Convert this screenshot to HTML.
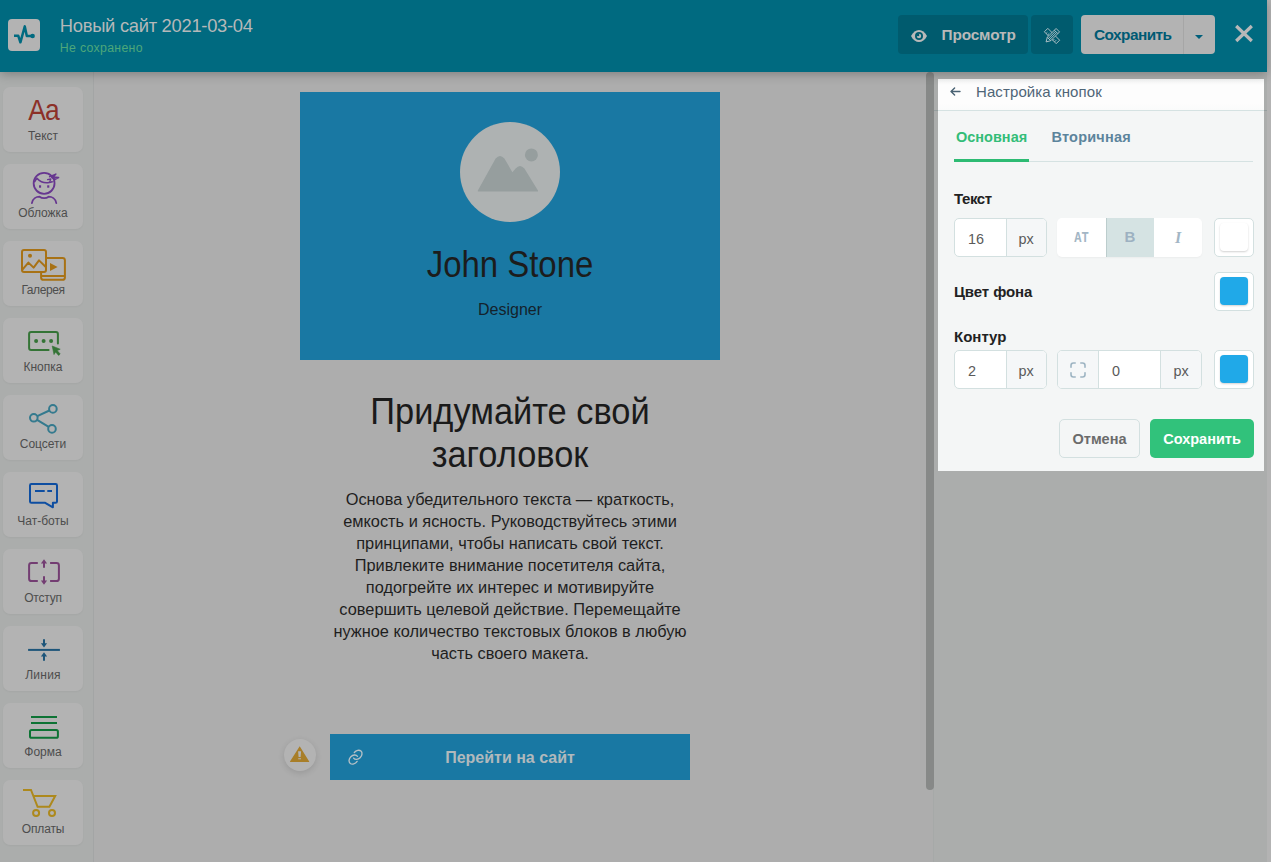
<!DOCTYPE html>
<html lang="ru">
<head>
<meta charset="utf-8">
<title>Новый сайт 2021-03-04</title>
<style>
*{box-sizing:border-box;margin:0;padding:0}
html,body{width:1271px;height:862px;overflow:hidden}
body{position:relative;background:#adadad;font-family:"Liberation Sans",sans-serif;color:#333}
.abs{position:absolute}
.t{position:absolute;white-space:nowrap;line-height:1}
svg{position:absolute;overflow:visible}

/* right strip */
#strip{left:1267px;top:0;width:4px;height:862px;background:#b3b3b3}

/* header */
#hdr{left:0;top:0;width:1267px;height:72px;background:#006a80;box-shadow:0 2px 10px rgba(0,0,0,.27);z-index:5}
#logo{left:8px;top:19px;width:32px;height:32px;border-radius:4px;background:#b3b3b3}
#ttl{left:59.8px;top:17.2px;font-size:18.4px;letter-spacing:-.3px;color:#b5b8b9}
#sub{left:59.8px;top:42.3px;font-size:12.3px;letter-spacing:.32px;color:#4da77a}
.hb{position:absolute;top:15px;height:39px;border-radius:4px;background:#005b6e}
.hbt{font-weight:bold;font-size:15.4px}

/* sidebar */
#side{left:0;top:72px;width:94px;height:790px;background:#abadac;border-right:1px solid #a3a5a5}
.it{position:absolute;left:3px;width:80px;height:65px;border-radius:7px;background:#b3b3b3;box-shadow:0 1px 2px rgba(0,0,0,.04)}
.it .lb{position:absolute;left:0;width:80px;top:42.6px;text-align:center;font-size:12px;line-height:1;color:#4d4d4d;white-space:nowrap}

/* canvas */
#card{left:300px;top:92px;width:420px;height:268px;background:#1978a3}
#ava{left:460px;top:122px;width:100px;height:100px;border-radius:50%;background:#aeb2b2}
.c{position:absolute;left:300px;width:420px;text-align:center;white-space:nowrap}

/* right */
#rside{left:934px;top:72px;width:333px;height:790px;background:#abadac}
#thumb{left:926px;top:72px;width:8px;height:718px;border-radius:4px;background:#878988}
#pan{left:938px;top:79px;width:326px;height:392px;background:#f4f6f6}
#panh{left:0;top:0;width:326px;height:31px;background:linear-gradient(#f4f5f5 0,#fdfdfd 5px,#fdfdfd 24px,#fafbfb 31px)}
.grp{position:absolute;height:39px;border:1px solid #d3e0e0;border-radius:5px;background:#fff;overflow:hidden}
.add{position:absolute;top:0;height:37px;background:#f5f7f8}
.pl{font-weight:bold;font-size:15px;color:#222}
.in{font-size:14.4px;color:#5a5a5a}
.sw{position:absolute;width:40px;height:39px;border:1px solid #d3e0e0;border-radius:5px;background:#fff}
.sw i{position:absolute;left:4.5px;top:4px;width:28.5px;height:28px;border-radius:4px;box-shadow:0 1px 2px rgba(0,0,0,.18)}
</style>
</head>
<body>

<div class="abs" id="strip"></div>

<!-- SIDEBAR -->
<div class="abs" id="side">
  <div class="it" style="top:15px">
    <div class="t" style="left:0;width:80px;text-align:center;top:8.2px;font-size:30px;letter-spacing:-1px;transform:translateX(.6px) scaleX(.88);color:#8c3028">Aa</div>
    <div class="lb">Текст</div>
  </div>
  <div class="it" style="top:92px">
    <svg width="80" height="65" viewBox="0 0 80 65" style="left:0;top:0"><g fill="none" stroke="#673790" stroke-width="1.8" stroke-linecap="round" stroke-linejoin="round"><circle cx="41.1" cy="19.35" r="10.45"/><path d="M28.9 39.2 C29.6 34.6 33.4 32.7 36.6 32.7 C39 34.6 43.2 34.6 45.6 32.7 C48.8 32.7 52.6 34.6 53.3 39.2"/><path d="M31.7 17.6 C32.4 16.2 33.2 15.2 34.2 14.4 C36.6 17.2 41 19 44.8 18.7 C46.6 18.5 48 18.3 49.2 17.8" stroke-width="1.6"/><path d="M46.6 12.6 L52.9 10.1 L50.2 13 L55.6 13.6 L51.6 15.6 L51.2 17.4" stroke-width="1.5"/><path d="M47 12.6 L51.6 11 L49.6 13.2 L53.6 13.8 L51 15.2 L48.6 14.2 Z" fill="#673790" stroke="none"/><path d="M44.6 15.6 L47.8 15 L46.8 17.4" stroke-width="1.3"/></g><rect x="36" y="21.3" width="2.1" height="2.4" fill="#673790"/><rect x="44.2" y="21.3" width="2.1" height="2.4" fill="#673790"/></svg>
    <div class="lb">Обложка</div>
  </div>
  <div class="it" style="top:169px">
    <svg width="80" height="65" viewBox="0 0 80 65" style="left:0;top:0"><g fill="none" stroke="#a87215" stroke-width="2" stroke-linejoin="round"><rect x="19" y="8.9" width="24" height="22" rx="2"/><path d="M43 16.9 H59.5 Q61.9 16.9 61.9 19.3 V36.4 Q61.9 38.8 59.5 38.8 H40.5 Q38.1 38.8 38.1 36.4 V31"/><path d="M38.6 35 H61.6"/><path d="M19.4 28.6 L25.4 21.6 L30.6 26.6 L36 19.4 L42.8 26"/></g><circle cx="27" cy="14.8" r="2" fill="#a87215"/><path d="M47 22 L54.6 26 L47 30 Z" fill="#a87215"/></svg>
    <div class="lb" style="letter-spacing:-.4px">Галерея</div>
  </div>
  <div class="it" style="top:246px">
    <svg width="80" height="65" viewBox="0 0 80 65" style="left:0;top:0"><g fill="none" stroke="#347436" stroke-width="2" stroke-linecap="round" stroke-linejoin="round"><path d="M54.9 25.6 V16 Q54.9 14 52.9 14 H28.1 Q26.1 14 26.1 16 V29.9 Q26.1 31.9 28.1 31.9 H45.6"/></g><circle cx="33.1" cy="22.9" r="2" fill="#347436"/><circle cx="40.6" cy="22.9" r="2" fill="#347436"/><circle cx="48.1" cy="22.9" r="2" fill="#347436"/><path d="M49.2 28 L57.2 31.2 L54.2 32.6 L57.2 36 L55.6 37.4 L52.6 34 L51 36.6 Z" fill="#347436" stroke="#347436" stroke-width="0.6" stroke-linejoin="round"/></svg>
    <div class="lb">Кнопка</div>
  </div>
  <div class="it" style="top:323px">
    <svg width="80" height="65" viewBox="0 0 80 65" style="left:0;top:0"><g fill="none" stroke="#347a8e" stroke-width="2"><circle cx="49.9" cy="13.9" r="3.8"/><circle cx="30.8" cy="22.8" r="3.8"/><circle cx="49" cy="33.9" r="3.8"/><path d="M34.3 21.2 L46.4 15.5 M34.1 24.8 L45.7 31.9"/></g></svg>
    <div class="lb">Соцсети</div>
  </div>
  <div class="it" style="top:400px">
    <svg width="80" height="65" viewBox="0 0 80 65" style="left:0;top:0"><g fill="none" stroke="#0e4ea1" stroke-width="2" stroke-linejoin="round"><path d="M28.4 12 H52.6 Q54 12 54 13.4 V29.4 Q54 30.8 52.6 30.8 H49.9 V35.3 L42.2 30.8 H28.4 Q27 30.8 27 29.4 V13.4 Q27 12 28.4 12 Z"/><path d="M32 19 H41.7 M44.3 19 H49"/></g></svg>
    <div class="lb">Чат-боты</div>
  </div>
  <div class="it" style="top:477px">
    <svg width="80" height="65" viewBox="0 0 80 65" style="left:0;top:0"><g fill="none" stroke="#733d72" stroke-width="2" stroke-linejoin="round"><path d="M34.8 14 H28.5 Q26.1 14 26.1 16.4 V29.7 Q26.1 32.1 28.5 32.1 H34.8"/><path d="M47.1 14 H53.5 Q55.9 14 55.9 16.4 V29.7 Q55.9 32.1 53.5 32.1 H47.1"/><path d="M41 12.6 V18.8 M41 27.2 V33.4"/></g><path d="M37.9 14.6 L41 10.2 L44.1 14.6 Z M37.9 31.4 L41 35.8 L44.1 31.4 Z" fill="#733d72"/></svg>
    <div class="lb" style="letter-spacing:-.2px">Отступ</div>
  </div>
  <div class="it" style="top:554px">
    <svg width="80" height="65" viewBox="0 0 80 65" style="left:0;top:0"><g fill="none" stroke="#1d557a" stroke-width="2"><path d="M25.1 23.9 H56.9"/><path d="M41 13.2 V18.4 M41 29.4 V34.8"/></g><path d="M37.9 17.2 L41 21.6 L44.1 17.2 Z M37.9 30.6 L41 26.2 L44.1 30.6 Z" fill="#1d557a"/></svg>
    <div class="lb" style="letter-spacing:.25px">Линия</div>
  </div>
  <div class="it" style="top:631px">
    <svg width="80" height="65" viewBox="0 0 80 65" style="left:0;top:0"><g fill="none" stroke="#0d7334" stroke-width="2"><path d="M28 14 H54 M28 19.9 H54"/><rect x="27" y="26.9" width="27.9" height="7.9" rx="1.6"/></g></svg>
    <div class="lb">Форма</div>
  </div>
  <div class="it" style="top:708px">
    <svg width="80" height="65" viewBox="0 0 80 65" style="left:0;top:0"><g fill="none" stroke="#ad891d" stroke-width="2" stroke-linejoin="miter"><path d="M20 10 H28 L34.6 26.8 H46.4 L52.2 15.9 H31"/><circle cx="33.1" cy="32.9" r="3"/><circle cx="49" cy="32.9" r="3"/></g></svg>
    <div class="lb" style="letter-spacing:-.15px">Оплаты</div>
  </div>
</div>

<!-- CANVAS -->
<div class="abs" id="card"></div>
<div class="abs" id="ava">
  <svg width="100" height="100" viewBox="0 0 100 100" style="left:0;top:0"><path d="M18.6 69.6 Q17.2 69.6 18 68.2 L35.6 36.6 Q40 31.4 44.4 36.6 L52.4 50.2 L55.6 46.4 Q60 41.4 64.4 46.4 L77.8 68.2 Q78.6 69.6 77.2 69.6 Z" fill="#969e9e"/><circle cx="71.4" cy="32.9" r="6.5" fill="#969e9e"/></svg>
</div>
<div class="c" id="nm" style="top:243px;font-size:37px;line-height:44px;color:#1c1c1c;transform:scaleX(.89)">John Stone</div>
<div class="c" id="ds" style="top:298.5px;font-size:16px;line-height:22px;color:#14222c">Designer</div>
<div class="c" id="h1" style="top:390px;font-size:36.4px;line-height:43px;color:#1a1a1a;transform:scaleX(.945)">Придумайте свой<br>заголовок</div>
<div class="c" id="bd" style="top:488.3px;font-size:16.35px;line-height:22px;color:#1e1e1e">Основа убедительного текста — краткость,<br>емкость и ясность. Руководствуйтесь этими<br>принципами, чтобы написать свой текст.<br>Привлеките внимание посетителя сайта,<br>подогрейте их интерес и мотивируйте<br>совершить целевой действие. Перемещайте<br>нужное количество текстовых блоков в любую<br>часть своего макета.</div>
<div class="abs" id="warn" style="left:284px;top:739px;width:32px;height:32px;border-radius:50%;background:#b3b3b3;box-shadow:0 2px 6px rgba(0,0,0,.12)">
  <svg width="32" height="32" viewBox="0 0 32 32" style="left:0;top:0"><path d="M15.7 7.2 L6 22.6 Q5.8 23 6.3 23 H25 Q25.5 23 25.2 22.6 Z" fill="#a87e28"/><path d="M14.1 12.2 H17.1 L16.6 17.9 H14.6 Z M14.2 19.2 H17 V20.3 H14.2 Z" fill="#b3b3b3"/></svg>
</div>
<div class="abs" id="btn" style="left:330px;top:734px;width:360px;height:46px;background:#1978a3">
  <svg width="32" height="30" viewBox="0 0 32 30" style="left:10px;top:8px" fill="none" stroke="#b4c0c6" stroke-width="1.35" stroke-linecap="round"><path d="M14.3 10.5 A5.1 3.9 -45 1 1 13.6 16.1"/><path d="M17.5 14.3 A5.1 3.9 -45 1 0 17.1 19.4"/></svg>
  <div class="t" style="left:0;width:360px;text-align:center;top:16px;font-size:16px;font-weight:bold;color:#b1b9bc">Перейти на сайт</div>
</div>

<!-- RIGHT -->
<div class="abs" id="rside"></div>
<div class="abs" style="left:933px;top:72px;width:1px;height:790px;background:#a6a9a8"></div>
<div class="abs" id="thumb"></div>
<div class="abs" id="pan">
  <div class="abs" id="panh"></div>
  <div class="abs" style="left:-4px;top:31px;width:333px;height:1px;background:#959e9e"></div><div class="abs" style="left:0;top:31px;width:326px;height:1px;background:#d5e2e2"></div>
  <svg width="11" height="9" viewBox="0 0 11 9" style="left:12px;top:8px" fill="none" stroke="#4a6273" stroke-width="1.4" stroke-linecap="round" stroke-linejoin="round"><path d="M10 4.5 H1.2 M4.6 1 L1 4.5 L4.6 8"/></svg>
  <div class="t" id="pt" style="left:38px;top:5px;font-size:15px;letter-spacing:.1px;color:#4f6577">Настройка кнопок</div>

  <div class="t" id="tb1" style="left:18px;top:51px;font-size:14.5px;font-weight:bold;color:#33bd78">Основная</div>
  <div class="t" id="tb2" style="left:113.5px;top:51px;letter-spacing:.2px;font-size:14.5px;font-weight:bold;color:#5c849c">Вторичная</div>
  <div class="abs" style="left:16px;top:82px;width:299px;height:1px;background:#d5e2e2"></div>
  <div class="abs" style="left:16px;top:80px;width:75px;height:3px;background:#2dbb73"></div>

  <div class="t pl" id="l1" style="left:16px;top:112px;letter-spacing:-.4px">Текст</div>
  <div class="grp" style="left:16px;top:139px;width:93px">
    <div class="add" style="left:50.5px;width:41px;border-left:1px solid #d3e0e0"></div>
    <div class="t in" style="left:13px;top:13px">16</div>
    <div class="t in" style="left:63.6px;top:13px">px</div>
  </div>
  <div class="abs" id="bg3" style="left:119px;top:139px;width:145px;height:39px;border-radius:5px;background:#fff;overflow:hidden;box-shadow:0 1px 2px rgba(0,0,0,.04)">
    <div class="abs" style="left:49px;top:0;width:48px;height:39px;background:#d5e3e3;border-left:1px solid #bccdcd"></div>
    <div class="t" style="left:0;width:49px;text-align:center;top:12.5px;font-size:15px;font-weight:bold;letter-spacing:.2px;color:#a3b6c5;font-family:'Liberation Mono','DejaVu Sans Mono',monospace;transform:scaleX(.8)">AT</div>
    <div class="t" style="left:49px;width:48px;text-align:center;top:11px;font-size:15px;font-weight:bold;color:#9db1c1">B</div>
    <div class="t" style="left:97px;width:48px;text-align:center;top:12.3px;font-size:16px;font-style:italic;font-weight:bold;color:#a3b6c5;font-family:'Liberation Serif',serif">I</div>
  </div>
  <div class="sw" style="left:276px;top:139px"><i style="background:#fff"></i></div>

  <div class="t pl" id="l2" style="left:16px;top:205px;letter-spacing:-.1px">Цвет фона</div>
  <div class="sw" style="left:276px;top:193px"><i style="background:#20a9e8"></i></div>

  <div class="t pl" id="l3" style="left:16px;top:250px">Контур</div>
  <div class="grp" style="left:16px;top:271px;width:93px">
    <div class="add" style="left:50.5px;width:41px;border-left:1px solid #d3e0e0"></div>
    <div class="t in" style="left:13px;top:13px">2</div>
    <div class="t in" style="left:63.6px;top:13px">px</div>
  </div>
  <div class="grp" style="left:119px;top:271px;width:145px">
    <div class="add" style="left:0;width:41px;border-right:1px solid #d3e0e0"></div>
    <div class="add" style="left:102px;width:41px;border-left:1px solid #d3e0e0"></div>
    <svg width="16" height="16" viewBox="0 0 16 16" style="left:12px;top:11px" fill="none" stroke="#9db4c2" stroke-width="1.6" stroke-linecap="round"><path d="M1 5.2 V3.4 Q1 1 3.4 1 H5.2 M10.8 1 H12.6 Q15 1 15 3.4 V5.2 M15 10.8 V12.6 Q15 15 12.6 15 H10.8 M5.2 15 H3.4 Q1 15 1 12.6 V10.8"/></svg>
    <div class="t in" style="left:54px;top:13px">0</div>
    <div class="t in" style="left:115.6px;top:13px">px</div>
  </div>
  <div class="sw" style="left:276px;top:271px"><i style="background:#20a9e8"></i></div>

  <div class="abs" style="left:121px;top:340px;width:81px;height:39px;border:1px solid #d3e0e0;border-radius:5px"></div>
  <div class="t" id="b1" style="left:121px;width:81px;text-align:center;top:352.7px;font-size:14.5px;font-weight:bold;color:#6b6b6b">Отмена</div>
  <div class="abs" style="left:212px;top:340px;width:104px;height:39px;border-radius:5px;background:#31c27b"></div>
  <div class="t" id="b2" style="left:212px;width:104px;text-align:center;top:352.7px;font-size:14.5px;font-weight:bold;color:#fff">Сохранить</div>
</div>

<!-- HEADER -->
<div class="abs" id="hdr">
  <div class="abs" id="logo">
    <svg width="32" height="32" viewBox="0 0 32 32" style="left:0;top:0"><path d="M6 16.8 H10.3 L12.4 23.3 L16.8 7.4 L18.8 16.9 H24" fill="none" stroke="#006a80" stroke-width="2.5" stroke-linejoin="round" stroke-linecap="butt"/><circle cx="24.6" cy="17" r="2.3" fill="#006a80"/></svg>
  </div>
  <div class="t" id="ttl">Новый сайт 2021-03-04</div>
  <div class="t" id="sub">Не сохранено</div>

  <div class="hb" style="left:898px;width:130px">
    <svg width="16" height="12" viewBox="0 0 16 12" style="left:13px;top:15px"><path d="M0 6 C2 2 5 0 8 0 C11 0 14 2 16 6 C14 10 11 12 8 12 C5 12 2 10 0 6 Z" fill="#b9b9b9"/><circle cx="8" cy="6" r="4" fill="#005b6e"/><circle cx="8" cy="6" r="2.2" fill="#b9b9b9"/><circle cx="7" cy="5" r="1.3" fill="#005b6e"/></svg>
    <div class="t hbt" id="hb1" style="left:43.5px;top:11.8px;letter-spacing:-.15px;color:#b9b9b9">Просмотр</div>
  </div>
  <div class="hb" style="left:1031px;width:42px">
    <svg width="16" height="16" viewBox="0 0 16 16" style="left:13px;top:13px" fill="none" stroke="#b0c1c6" stroke-width="1.2"><g transform="translate(8 8) scale(.76) translate(-8 -8)">
      <g transform="rotate(-45 8 8)"><rect x="4.8" y="-3" width="6.4" height="22"/><path d="M4.8 0.2 h2.4 M4.8 3 h3.2 M4.8 13 h2.4 M4.8 15.8 h3.2"/></g>
      <g transform="rotate(45 8 8)"><path d="M4.8 -2.8 h6.4 v16.4 l-3.2 5.4 l-3.2 -5.4 Z" fill="#005b6e"/><path d="M4.8 0.4 h6.4 M4.8 13.6 h6.4 M6.9 0.4 v13.2 M9.1 0.4 v13.2"/></g>
    </g></svg>
  </div>
  <div class="hb" style="left:1081px;width:134px;background:#b3b3b3">
    <div class="abs" style="left:102px;top:0;width:1px;height:39px;background:#a6a6a6"></div>
    <div class="t hbt" id="hb2" style="left:13px;top:11.8px;letter-spacing:-.55px;color:#005a73">Сохранить</div>
    <svg width="8" height="4" viewBox="0 0 8 4" style="left:114px;top:19.5px"><path d="M0 0 H8 L4 4 Z" fill="#005f7b"/></svg>
  </div>
  <svg width="18" height="17" viewBox="0 0 18 17" style="left:1235px;top:25px"><path d="M1.2 1 L16.8 16 M16.8 1 L1.2 16" stroke="#b8b8b8" stroke-width="3.2" fill="none"/></svg>
</div>

</body>
</html>
